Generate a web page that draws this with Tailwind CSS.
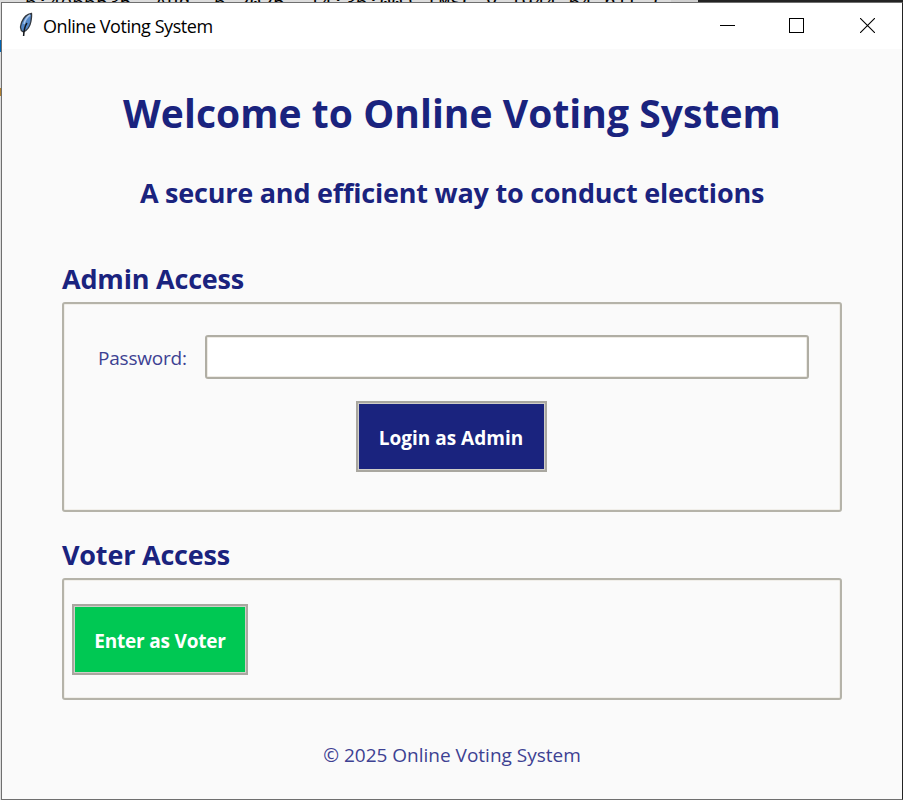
<!DOCTYPE html>
<html lang="en">
<head>
    <meta charset="UTF-8">
    <meta name="viewport" content="width=device-width, initial-scale=1.0">
    <title>Online Voting System</title>
    <script src="https://cdn.jsdelivr.net/npm/@tailwindcss/browser@4"></script>
</head>
<body class="w-[903px] h-[800px] overflow-hidden bg-[#232323] font-['Open_Sans',sans-serif]">
    <div class="relative w-[903px] h-[800px] overflow-hidden">
        <!-- Shell window behind the app -->
        <div class="absolute left-0 top-0 w-[698px] h-[800px] bg-[#dcdcdc] overflow-hidden">
            <pre class="absolute left-[25px] -top-[7px] text-[19.7px] leading-[22px] text-black font-['Liberation_Mono',monospace]">6:4e66535, Aug  6 2025, 14:36:00) [MSC v.1944 64 bit (</pre>
            <div class="absolute left-[671px] top-0 w-[27px] h-[3px] bg-[#cfcfcf]"></div>
            <div class="absolute left-0 top-[40px] w-[1px] h-[12px] bg-[#0063b1]"></div>
            <div class="absolute left-0 top-[88px] w-[1px] h-[8px] bg-[#b08030]"></div>
        </div>

        <!-- App window -->
        <div class="absolute left-[1px] top-[2px] w-[902px] h-[798px] flex flex-col bg-[#fafafa] border border-[#6f6f6f] border-r-[#232323]">
            <!-- Title bar -->
            <div class="flex items-center h-[46px] shrink-0 bg-white">
                <svg class="w-[16px] h-[26px] ml-[16px] -mt-[2px]" viewBox="0 0 16 26">
                    <path d="M13.500 1.500C9.500 2 5.500 5.500 3.500 10.500C2.400 13 2.300 16 3.300 18.500L5.500 20C9.500 18 12 14.500 12.800 10C13.300 7 13.900 4 13.500 1.500Z" fill="#5388c9" stroke="#33383f" stroke-width="1.300"/>
                    <path d="M12 3C9 5 7 8 6 12" fill="none" stroke="#a9c5e8" stroke-width="1.600"/>
                    <path d="M9 11C7.500 13 6 17 5.600 24" fill="none" stroke="#15181d" stroke-width="1.500"/>
                </svg>
                <span class="ml-[9px] text-[18px] leading-6 tracking-[-0.45px] text-black whitespace-nowrap">Online Voting System</span>
                <div class="flex items-center ml-auto mr-[27px] -mt-[2px]">
                    <svg class="w-[15px] h-[15px] mr-[54px]" viewBox="0 0 15 15"><path d="M0 7.500H15" stroke="#000"/></svg>
                    <svg class="w-[15px] h-[15px] mr-[56px]" viewBox="0 0 15 15"><rect x=".5" y=".5" width="14" height="14" fill="none" stroke="#000"/></svg>
                    <svg class="w-[15px] h-[15px]" viewBox="0 0 15 15"><path d="M0 0L15 15M15 0L0 15" stroke="#000" stroke-width="1.100"/></svg>
                </div>
            </div>

            <!-- Content -->
            <div class="flex flex-col px-[60px] text-[#1a237e]">
                <h1 class="mt-[36px] h-[56px] leading-[56px] text-[39px] tracking-[0.05px] font-bold text-center whitespace-nowrap">Welcome to Online Voting System</h1>
                <h2 class="mt-[32px] h-[40px] leading-[40px] text-[27px] tracking-[-0.22px] font-bold text-center whitespace-nowrap">A secure and efficient way to conduct elections</h2>

                <!-- Admin -->
                <h3 class="mt-[46px] h-[40px] leading-[40px] text-[27px] tracking-[-0.2px] font-bold whitespace-nowrap">Admin Access</h3>
                <div class="mt-[3px] h-[210px] flex flex-col items-center border-2 border-[#b5b3a9] rounded-[3px] shadow-[inset_0_0_0_1px_#f1efea]">
                    <div class="mt-[31px] w-full flex items-center pl-[34px] pr-[31px]">
                        <label for="password" class="w-[107px] pt-[2px] text-[19px] leading-7 tracking-[-0.2px] text-[#3d4192] whitespace-nowrap">Password:</label>
                        <input id="password" type="password" class="flex-1 h-[44px] bg-white border-2 border-[#b0aea4] rounded-[3px] shadow-[inset_0_0_0_1px_#eeebe5] outline-none">
                    </div>
                    <button class="mt-[22px] mr-[2px] w-[191px] h-[71px] pt-[4px] bg-[#1a237e] border-2 border-[#a9a7a0] shadow-[inset_0_0_0_1px_#d0cec8] text-[19px] font-bold text-white whitespace-nowrap">Login as Admin</button>
                </div>

                <!-- Voter -->
                <h3 class="mt-[23px] h-[40px] leading-[40px] text-[27px] tracking-[-0.2px] font-bold whitespace-nowrap">Voter Access</h3>
                <div class="mt-[3px] h-[122px] flex items-start pl-[8px] pt-[24px] border-2 border-[#b5b3a9] rounded-[3px] shadow-[inset_0_0_0_1px_#f1efea]">
                    <button class="w-[176px] h-[71px] pt-[3px] bg-[#00c853] border-2 border-[#a9a7a0] shadow-[inset_0_0_0_1px_#d0cec8] text-[19px] tracking-[-0.2px] font-bold text-white whitespace-nowrap">Enter as Voter</button>
                </div>

                <p class="mt-[40px] h-[30px] leading-[30px] text-[19px] text-center text-[#3d4192] whitespace-nowrap">© 2025 Online Voting System</p>
            </div>
        </div>
    </div>
</body>
</html>
